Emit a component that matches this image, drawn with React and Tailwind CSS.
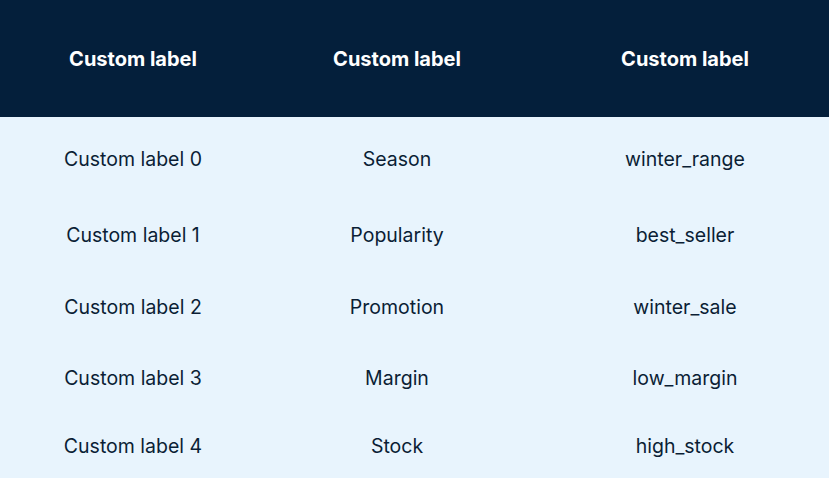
const rows = [
  { label: 'Custom label 0', attr: 'Season', value: 'winter_range', h: 'h-[86px]' },
  { label: 'Custom label 1', attr: 'Popularity', value: 'best_seller', h: 'h-[66px]' },
  { label: 'Custom label 2', attr: 'Promotion', value: 'winter_sale', h: 'h-[78px]' },
  { label: 'Custom label 3', attr: 'Margin', value: 'low_margin', h: 'h-[64px]' },
  { label: 'Custom label 4', attr: 'Stock', value: 'high_stock', h: 'h-[72px]' },
]

export default function App() {
  return (
    <div className="w-[829px] h-[478px] overflow-hidden bg-[#e8f4fd] font-['Inter',sans-serif] text-[#0b1e35]">
      <div className="grid grid-cols-[266px_262px_314px] h-[117px] bg-[#041f3b] text-white font-bold text-[20px] items-center">
        <div className="text-center">Custom label</div>
        <div className="text-center">Custom label</div>
        <div className="text-center">Custom label</div>
      </div>
      {rows.map((r) => (
        <div key={r.label} className={`grid grid-cols-[266px_262px_314px] items-center text-[19.5px] ${r.h}`}>
          <div className="text-center">{r.label}</div>
          <div className="text-center">{r.attr}</div>
          <div className="text-center">{r.value}</div>
        </div>
      ))}
    </div>
  )
}
